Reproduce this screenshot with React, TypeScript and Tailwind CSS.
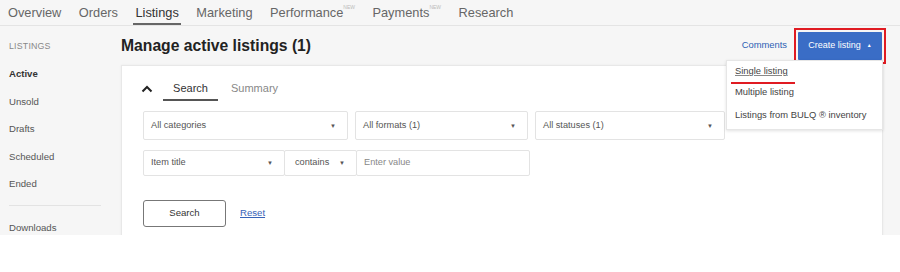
import React from 'react';

const navItems = [
  { label: 'Overview' },
  { label: 'Orders' },
  { label: 'Listings', active: true },
  { label: 'Marketing' },
  { label: 'Performance', badge: true },
  { label: 'Payments', badge: true },
  { label: 'Research' },
];

const sideItems = ['Unsold', 'Drafts', 'Scheduled', 'Ended'];

const Caret = () => <span className="text-[6px] text-[#555] leading-none">▼</span>;

const SelectBox: React.FC<{ label: string; className: string }> = ({ label, className }) => (
  <div
    className={`flex items-center justify-between bg-white border border-[#e3e3e3] rounded-[2px] pl-[7px] pr-[11px] text-[9.2px] text-[#555] ${className}`}
  >
    <span>{label}</span>
    <Caret />
  </div>
);

export default function App() {
  return (
    <div className="w-[900px] h-[272px] bg-white overflow-hidden" style={{ fontFamily: '"Liberation Sans", Arial, sans-serif' }}>
      <div className="h-[235px] bg-[#f6f6f6] overflow-hidden flex flex-col">
        {/* top nav */}
        <div className="h-[26px] shrink-0 border-b border-[#e4e4e4] flex items-start pl-[8px] gap-[17.5px] text-[12.8px] text-[#666]">
          {navItems.map((n) => (
            <div
              key={n.label}
              className={`h-[25px] pt-[3px] flex items-start ${n.active ? 'text-[#333] border-b-2 border-[#666] -mx-[2px] px-[2px]' : ''}`}
            >
              <span>{n.label}</span>
              {n.badge && <span className="text-[5px] leading-[6px] text-[#bbb] mt-[1px]">NEW</span>}
            </div>
          ))}
        </div>

        <div className="flex flex-1 min-h-0">
          {/* sidebar */}
          <div className="w-[121px] shrink-0 pl-[9px] pt-[15px] text-[9.6px] text-[#555]">
            <div className="h-[11px] leading-[11px] text-[8.8px] text-[#888] tracking-[0.2px]">LISTINGS</div>
            <div className="mt-[16px] h-[11px] leading-[11px] font-bold text-[#333]">Active</div>
            {sideItems.map((s) => (
              <div key={s} className="mt-[16.5px] h-[11px] leading-[11px]">{s}</div>
            ))}
            <div className="mt-[16px] w-[92px] border-t border-[#e3e3e3]" />
            <div className="mt-[16px] h-[11px] leading-[11px]">Downloads</div>
          </div>

          {/* main */}
          <div className="flex-1 pr-[17px] flex flex-col">
            <div className="h-[39px] shrink-0 flex items-center justify-between relative">
              <h1 className="text-[15.7px] font-bold text-[#222] pt-[1px]">Manage active listings (1)</h1>
              <div className="flex items-center">
                <a className="text-[9.4px] text-[#2d5fb4] mr-[7px]">Comments</a>
                <div className="border-2 border-[#e01b22] p-[2px] -mr-[3px] -my-[1px]">
                  <div className="w-[84px] h-[28px] bg-[#3a6dc6] rounded-[1px] flex items-center justify-center gap-[6px] text-[9px] text-white">
                    <span>Create listing</span>
                    <span className="text-[5px]">▲</span>
                  </div>
                </div>
              </div>
              {/* dropdown menu */}
              <div className="absolute right-0 top-[34px] w-[157px] z-10 bg-white border border-[#e6e6e6] shadow-[0_1px_3px_rgba(0,0,0,0.12)] pb-[2px] text-[9.4px] text-[#444] whitespace-nowrap">
                <div className="px-[8px] h-[20px] flex flex-col justify-center relative">
                  <span className="underline decoration-[#888]">Single listing</span>
                  <div className="absolute left-[4px] top-[21px] w-[64px] h-[2px] bg-[#e01b22]" />
                </div>
                <div className="px-[8px] h-[23px] flex items-center">Multiple listing</div>
                <div className="px-[8px] h-[23px] flex items-center">Listings from BULQ ® inventory</div>
              </div>
            </div>

            {/* card */}
            <div className="h-[200px] shrink-0 bg-white border border-[#e8e8e8] shadow-[0_0_2px_rgba(0,0,0,0.06)] pl-[21px] pt-[8px]">
              <div className="flex items-start h-[27px]">
                <svg width="12" height="8" viewBox="0 0 12 8" className="mt-[11px] ml-[-2px]">
                  <path d="M1.5 6.5 L6 2 L10.5 6.5" stroke="#222" strokeWidth="2" fill="none" />
                </svg>
                <div className="ml-[10px] w-[55px] h-[27px] border-b-2 border-[#555] flex justify-center pt-[6px] text-[11px] text-[#333]">
                  Search
                </div>
                <div className="ml-[13px] pt-[6px] text-[11px] text-[#888]">Summary</div>
              </div>

              <div className="mt-[10px] flex gap-[7px]">
                <SelectBox label="All categories" className="w-[205px] h-[29px]" />
                <SelectBox label="All formats (1)" className="w-[173px] h-[29px]" />
                <SelectBox label="All statuses (1)" className="w-[190px] h-[29px]" />
              </div>

              <div className="mt-[10px] flex">
                <SelectBox label="Item title" className="w-[142px] h-[26px]" />
                <SelectBox label="contains" className="w-[73px] h-[26px] -ml-[1px] pl-[10px]" />
                <div className="w-[174px] h-[26px] -ml-[1px] bg-white border border-[#e3e3e3] rounded-[2px] flex items-center pl-[7px] text-[9.2px] text-[#888]">
                  Enter value
                </div>
              </div>

              <div className="mt-[24px] flex items-center">
                <button className="w-[83px] h-[27px] border border-[#777] rounded-[3px] bg-white text-[9.6px] text-[#333]">
                  Search
                </button>
                <a className="ml-[14px] text-[9.6px] text-[#3863b8] underline">Reset</a>
              </div>
            </div>
          </div>
        </div>
      </div>
    </div>
  );
}
